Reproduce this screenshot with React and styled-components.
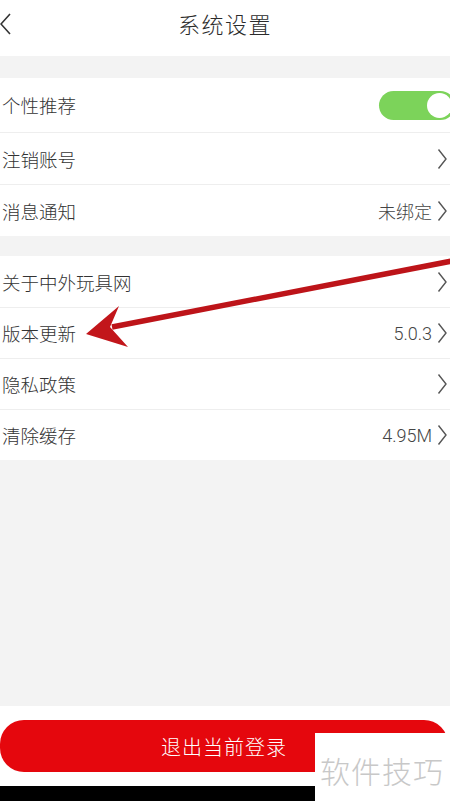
import styled, { createGlobalStyle } from "styled-components";

const GlobalStyle = createGlobalStyle`
  html, body {
    margin: 0;
    padding: 0;
    background: #f3f3f3;
    font-family: "Noto Sans CJK SC", "Noto Sans", sans-serif;
  }
`;

const Page = styled.div`
  position: relative;
  width: 450px;
  height: 801px;
  display: flex;
  flex-direction: column;
  background: #f3f3f3;
  overflow: hidden;
  font-weight: 300;
`;

const Header = styled.div`
  position: relative;
  height: 56px;
  flex: none;
  background: #fff;
  display: flex;
  align-items: center;
  justify-content: center;
`;

const BackButton = styled.div`
  position: absolute;
  left: 0;
  top: 12px;
  width: 14px;
  height: 24px;
`;

const Title = styled.div`
  font-size: 22px;
  color: #2b2b2b;
  margin-top: -11px;
  letter-spacing: 1.5px;
`;

const Group = styled.div`
  background: #fff;
  margin-top: ${(p) => p.mt}px;
  flex: none;
`;

const Row = styled.div`
  height: ${(p) => p.h}px;
  display: flex;
  align-items: center;
  padding: 0 3px 0 2px;
  border-top: ${(p) => (p.first ? "none" : "1px solid #eeeeee")};
  box-sizing: border-box;
`;

const Label = styled.div`
  flex: 1;
  font-size: 18.5px;
  color: #333;
`;

const Value = styled.span`
  font-family: Roboto, "Noto Sans CJK SC", sans-serif;
  font-size: 18px;
  color: #444;
  margin-right: 5px;
`;

const Toggle = styled.div`
  width: 76px;
  height: 29px;
  border-radius: 15px;
  background: #7cd35a;
  margin-right: -8px;
  display: flex;
  align-items: center;
  justify-content: flex-end;
  padding-right: 3px;
  box-sizing: border-box;
`;

const Knob = styled.div`
  width: 25px;
  height: 25px;
  border-radius: 50%;
  background: #fff;
`;

const Filler = styled.div`
  flex: 1;
`;

const Footer = styled.div`
  flex: none;
  height: 80px;
  background: #fff;
  padding-top: 14px;
  box-sizing: border-box;
`;

const LogoutButton = styled.div`
  width: 448px;
  height: 52px;
  border-radius: 24px;
  background: #e5070d;
  color: #fff;
  font-size: 20px;
  display: flex;
  align-items: center;
  justify-content: center;
  letter-spacing: 1px;
`;

const BottomBar = styled.div`
  flex: none;
  height: 15px;
  background: #000;
`;

const Watermark = styled.div`
  position: absolute;
  right: 0;
  bottom: 0;
  width: 135px;
  height: 68px;
  background: #fff;
  color: #c8c8c8;
  font-size: 30px;
  display: flex;
  align-items: center;
  padding-left: 5px;
  padding-top: 6px;
  box-sizing: border-box;
  letter-spacing: 1px;
`;

const ArrowLayer = styled.svg`
  position: absolute;
  left: 0;
  top: 0;
  pointer-events: none;
`;

const Chevron = () => (
  <svg width="10" height="22" viewBox="0 0 10 22">
    <path d="M1.5 1.5 L9 11 L1.5 20.5" fill="none" stroke="#555" strokeWidth="1.4" />
  </svg>
);

const rows1 = [
  { label: "个性推荐", toggle: true, h: 54 },
  { label: "注销账号", h: 52 },
  { label: "消息通知", value: "未绑定", h: 52 },
];

const rows2 = [
  { label: "关于中外玩具网", h: 51 },
  { label: "版本更新", value: "5.0.3", h: 51 },
  { label: "隐私政策", h: 51 },
  { label: "清除缓存", value: "4.95M", h: 51 },
];

const renderRows = (rows) =>
  rows.map((r, i) => (
    <Row key={r.label} h={r.h} first={i === 0}>
      <Label>{r.label}</Label>
      {r.toggle ? (
        <Toggle>
          <Knob />
        </Toggle>
      ) : (
        <>
          {r.value && <Value>{r.value}</Value>}
          <Chevron />
        </>
      )}
    </Row>
  ));

const App = () => {
  return (
    <>
      <GlobalStyle />
      <Page>
        <Header>
          <BackButton>
            <svg width="14" height="24" viewBox="0 0 14 24">
              <path d="M10 2 L1 12 L10 22" fill="none" stroke="#333" strokeWidth="1.6" />
            </svg>
          </BackButton>
          <Title>系统设置</Title>
        </Header>
        <Group mt={22}>{renderRows(rows1)}</Group>
        <Group mt={20}>{renderRows(rows2)}</Group>
        <Filler />
        <Footer>
          <LogoutButton>退出当前登录</LogoutButton>
        </Footer>
        <BottomBar />
        <Watermark>软件技巧</Watermark>
        <ArrowLayer width="450" height="801" viewBox="0 0 450 801">
          <line x1="452" y1="261" x2="112" y2="327" stroke="#bd1419" strokeWidth="5.5" />
          <polygon points="86,334 119,306 110,327 128,347" fill="#c2161b" />
        </ArrowLayer>
      </Page>
    </>
  );
};

export default App;
